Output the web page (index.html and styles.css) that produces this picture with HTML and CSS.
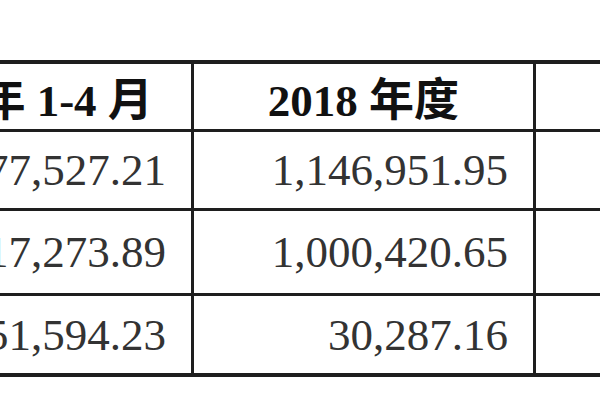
FILE: index.html
```html
<!DOCTYPE html>
<html lang="zh">
<head>
<meta charset="utf-8">
<link rel="stylesheet" href="styles.css">
</head>
<body>
<div class="page">
  <table class="fin">
    <colgroup>
      <col class="c1"><col class="c2"><col class="c3">
    </colgroup>
    <tr class="head">
      <th>2019 年 1-4 月</th>
      <th>2018 年度</th>
      <th></th>
    </tr>
    <tr class="r1">
      <td>1,277,527.21</td>
      <td>1,146,951.95</td>
      <td></td>
    </tr>
    <tr class="r2">
      <td>1,017,273.89</td>
      <td>1,000,420.65</td>
      <td></td>
    </tr>
    <tr class="r3">
      <td>151,594.23</td>
      <td>30,287.16</td>
      <td></td>
    </tr>
  </table>
</div>
</body>
</html>
```
FILE: styles.css
```css
html, body {
  margin: 0;
  padding: 0;
  background: #ffffff;
  overflow: hidden;
}
.page {
  width: 600px;
  height: 400px;
  overflow: hidden;
  padding-top: 60px;
  box-sizing: border-box;
}
.fin {
  margin-left: -162px;
  border-collapse: collapse;
  table-layout: fixed;
  width: 900px;
  font-family: "Liberation Serif", "Noto Sans CJK SC", serif;
  color: #333333;
}
.c1 { width: 353px; }
.c2 { width: 342px; }
.c3 { width: 205px; }
.fin th, .fin td {
  border: 3px solid #1e1e1e;
  padding: 0 25px 0 0;
  font-size: 45px;
  white-space: nowrap;
  overflow: hidden;
}
.fin tr:first-child th { border-top-width: 4px; }
.fin tr:last-child td { border-bottom-width: 4px; }
.fin th {
  font-weight: bold;
  text-align: center;
  padding: 0;
  color: #111111;
  height: 63px;
}
.fin td {
  text-align: right;
}
.r1 td { height: 76px; }
.r2 td { height: 82px; }
.r3 td { height: 77px; }
```
